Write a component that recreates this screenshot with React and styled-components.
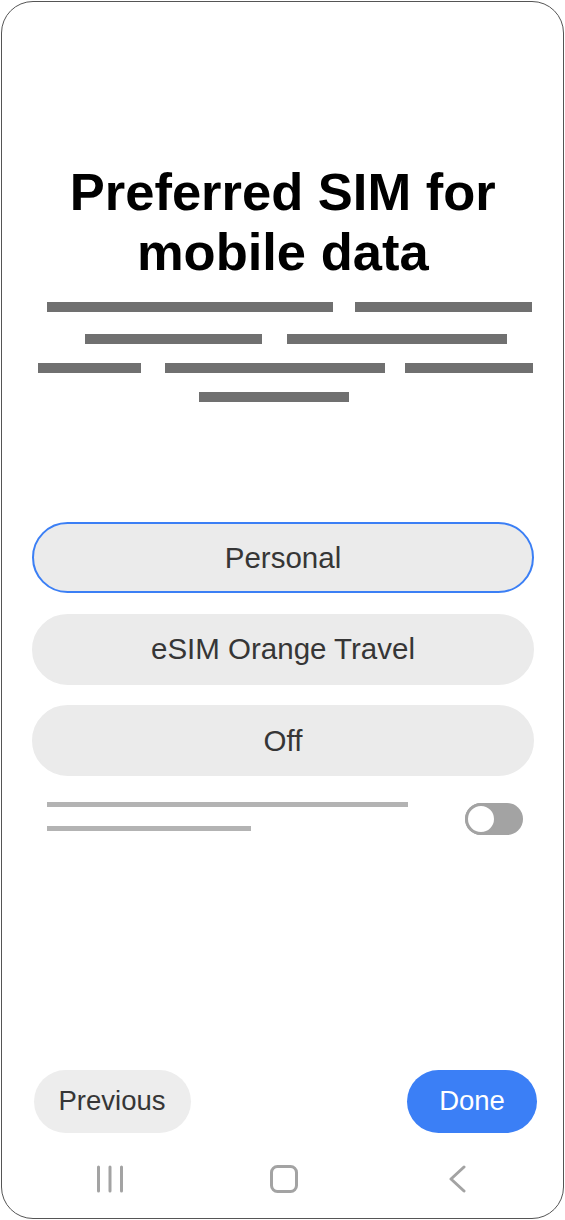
import styled, { createGlobalStyle } from 'styled-components';

const GlobalStyle = createGlobalStyle`
  html, body {
    margin: 0;
    padding: 0;
    background: #ffffff;
  }
  body {
    font-family: "Liberation Sans", Arial, sans-serif;
  }
`;

const Frame = styled.div`
  box-sizing: border-box;
  width: 563px;
  height: 1218px;
  margin: 1px;
  border: 1.5px solid #555555;
  border-radius: 32px;
  display: flex;
  flex-direction: column;
  padding: 0 29px 0 29.5px;
`;

const Title = styled.h1`
  margin: 160px 0 0;
  font-size: 52.5px;
  line-height: 60px;
  font-weight: 700;
  color: #000000;
  text-align: center;
`;

const Placeholder = styled.div`
  display: flex;
  flex-direction: column;
  gap: 19px;
  margin-top: 20px;
`;

const BarRow = styled.div`
  display: flex;
  padding-left: ${p => p.offset}px;
  margin-top: ${p => p.shift || 0}px;
`;

const Bar = styled.div`
  height: 10px;
  width: ${p => p.w}px;
  margin-left: ${p => p.before || 0}px;
  background: #707070;
`;

const Options = styled.div`
  display: flex;
  flex-direction: column;
  gap: 20.5px;
  margin-top: 120px;
  padding-left: 0.5px;
`;

const Option = styled.button`
  box-sizing: border-box;
  width: 502px;
  height: 71px;
  border-radius: 36px;
  border: 2px solid ${p => (p.selected ? '#3b7ff5' : '#ebebeb')};
  background: #ebebeb;
  color: #363636;
  font-family: "Liberation Sans", Arial, sans-serif;
  font-size: 29.5px;
  padding: 0;
  cursor: pointer;
`;

const SettingRow = styled.div`
  display: flex;
  align-items: flex-start;
  justify-content: space-between;
  margin-top: 26px;
  padding: 0 11px 0 15.5px;
`;

const Lines = styled.div`
  display: flex;
  flex-direction: column;
  gap: 19.5px;
`;

const Line = styled.div`
  height: 4.5px;
  width: ${p => p.w}px;
  background: #b3b3b3;
`;

const Toggle = styled.div`
  box-sizing: border-box;
  width: 58px;
  height: 32px;
  margin-top: 1px;
  border-radius: 16px;
  background: #a3a3a3;
  display: flex;
  align-items: center;
`;

const Knob = styled.div`
  box-sizing: border-box;
  width: 32px;
  height: 32px;
  border-radius: 50%;
  border: 3px solid #a3a3a3;
  background: #ffffff;
`;

const Spacer = styled.div`
  flex: 1;
`;

const Footer = styled.div`
  display: flex;
  justify-content: space-between;
  align-items: center;
  padding-left: 2px;
  margin-right: -3px;
`;

const FooterButton = styled.button`
  height: 63px;
  border: none;
  border-radius: 32px;
  padding: 0;
  width: ${p => p.w}px;
  background: ${p => (p.primary ? '#3b7ff6' : '#ededed')};
  color: ${p => (p.primary ? '#ffffff' : '#363636')};
  font-family: "Liberation Sans", Arial, sans-serif;
  font-size: 27.5px;
  cursor: pointer;
`;

const NavBar = styled.nav`
  display: grid;
  grid-template-columns: repeat(3, 174px);
  justify-content: center;
  align-items: center;
  height: 28px;
  margin: 31px 0 26.5px;
  padding-left: 3px;
`;

const NavCell = styled.div`
  display: flex;
  justify-content: center;
  align-items: center;
`;

const RecentsIcon = () => (
  <svg width="30" height="28" viewBox="0 0 30 28" fill="none" stroke="#a3a3a3" strokeWidth="3" strokeLinecap="round">
    <path d="M3.5 2v24M15 2v24M26.5 2v24" />
  </svg>
);

const HomeIcon = () => (
  <svg width="30" height="30" viewBox="0 0 30 30" fill="none" stroke="#a3a3a3" strokeWidth="3">
    <rect x="2.5" y="2.5" width="25" height="25" rx="6" />
  </svg>
);

const BackIcon = () => (
  <svg width="20" height="28" viewBox="0 0 20 28" fill="none" stroke="#a3a3a3" strokeWidth="3" strokeLinecap="round" strokeLinejoin="round">
    <path d="M16 2L3 14l13 12" />
  </svg>
);

// each bar: [width, space before it]
const bars = [
  { offset: 15.5, items: [[286, 0], [177, 22]] },
  { offset: 53.5, items: [[177, 0], [220, 24.5]], shift: 3 },
  { offset: 6, items: [[103, 0], [220, 24], [128, 20]] },
  { offset: 167.5, items: [[150, 0]] },
];

const options = ['Personal', 'eSIM Orange Travel', 'Off'];

export default function App() {
  return (
    <>
      <GlobalStyle />
      <Frame>
        <Title>
          Preferred SIM for
          <br />
          mobile data
        </Title>

        <Placeholder>
          {bars.map((row, i) => (
            <BarRow key={i} offset={row.offset} shift={row.shift}>
              {row.items.map(([w, before], j) => (
                <Bar key={j} w={w} before={before} />
              ))}
            </BarRow>
          ))}
        </Placeholder>

        <Options>
          {options.map((label, i) => (
            <Option key={label} selected={i === 0}>
              {label}
            </Option>
          ))}
        </Options>

        <SettingRow>
          <Lines>
            <Line w={361} />
            <Line w={204} />
          </Lines>
          <Toggle>
            <Knob />
          </Toggle>
        </SettingRow>

        <Spacer />

        <Footer>
          <FooterButton w={157}>Previous</FooterButton>
          <FooterButton w={130} primary>
            Done
          </FooterButton>
        </Footer>

        <NavBar>
          <NavCell>
            <RecentsIcon />
          </NavCell>
          <NavCell>
            <HomeIcon />
          </NavCell>
          <NavCell>
            <BackIcon />
          </NavCell>
        </NavBar>
      </Frame>
    </>
  );
}
